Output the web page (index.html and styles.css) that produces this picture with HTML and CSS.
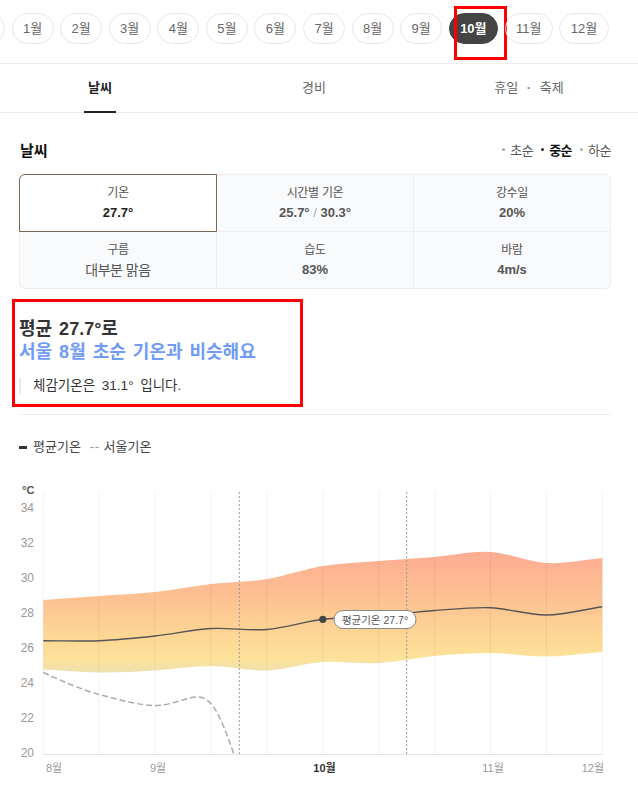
FILE: index.html
```html
<!DOCTYPE html>
<html lang="ko">
<head>
  <meta charset="UTF-8" />
  <meta name="viewport" content="width=device-width, initial-scale=1.0"/>
  <title>여행 날씨</title>
  <link rel="stylesheet" href="styles.css">
</head>
<body>
  <div class="months">
    <div class="month-track">
      <span class="month month-prev" aria-hidden="true"></span>
      <span class="month">1월</span>
      <span class="month">2월</span>
      <span class="month">3월</span>
      <span class="month">4월</span>
      <span class="month">5월</span>
      <span class="month">6월</span>
      <span class="month">7월</span>
      <span class="month">8월</span>
      <span class="month">9월</span>
      <span class="month active">10월<i class="mark mark-month"></i></span>
      <span class="month">11월</span>
      <span class="month">12월</span>
    </div>
  </div>

  <nav class="tabs">
    <a class="tab active"><span>날씨</span></a>
    <a class="tab"><span>경비</span></a>
    <a class="tab"><span>휴일 <b class="sep">·</b> 축제</span></a>
  </nav>

  <section class="weather">
    <div class="weather-head">
      <h2>날씨</h2>
      <ul class="period">
        <li>초순</li>
        <li class="on">중순</li>
        <li>하순</li>
      </ul>
    </div>

    <div class="stats">
      <div class="stat active"><span class="stat-label">기온</span><strong class="stat-value">27.7°</strong></div>
      <div class="stat"><span class="stat-label">시간별 기온</span><strong class="stat-value">25.7° <em>/</em> 30.3°</strong></div>
      <div class="stat"><span class="stat-label">강수일</span><strong class="stat-value">20%</strong></div>
      <div class="stat"><span class="stat-label">구름</span><strong class="stat-value plain">대부분 맑음</strong></div>
      <div class="stat"><span class="stat-label">습도</span><strong class="stat-value">83%</strong></div>
      <div class="stat"><span class="stat-label">바람</span><strong class="stat-value">4m/s</strong></div>
    </div>

    <div class="summary">
      <p class="summary-title">평균 27.7°로<br><em>서울 8월 초순 기온과 비슷해요</em></p>
      <p class="summary-note">체감기온은 31.1° 입니다.</p>
      <i class="mark mark-summary"></i>
    </div>

    <div class="legend">
      <span class="legend-solid"></span>평균기온
      <span class="legend-dash">--</span>서울기온
    </div>
  </section>

  <div class="chart">
    <svg width="638" height="321" viewBox="0 470 638 321">
      <defs>
        <linearGradient id="band" gradientUnits="userSpaceOnUse" x1="0" y1="552" x2="0" y2="673">
          <stop offset="0" stop-color="#fdac92"/>
          <stop offset="0.4" stop-color="#fdc292"/>
          <stop offset="0.72" stop-color="#fed895"/>
          <stop offset="0.88" stop-color="#fde29a"/>
          <stop offset="1" stop-color="#eee0b0"/>
        </linearGradient>
        <clipPath id="plot">
          <rect x="43" y="491" width="560" height="263"/>
        </clipPath>
      </defs>

      <text class="unit" x="22" y="494">°C</text>
      <g class="y-labels">
        <text x="34" y="512">34</text>
        <text x="34" y="547">32</text>
        <text x="34" y="582">30</text>
        <text x="34" y="617">28</text>
        <text x="34" y="652">26</text>
        <text x="34" y="687">24</text>
        <text x="34" y="722">22</text>
        <text x="34" y="757">20</text>
      </g>

      <path class="band" d="M43.3 600 C61.9 598.7 80.6 597.3 99.2 596 C117.8 594.7 136.5 594 155.1 592 C173.7 590 192.4 586.2 211 584 C229.6 581.8 248.3 582 266.9 579 C285.5 576 304.2 569 322.8 566 C341.4 563 360.1 562.5 378.7 561 C397.3 559.5 416 558.5 434.6 557 C453.2 555.5 471.9 551 490.5 552 C509.1 553 527.8 562 546.4 563 C565 564 583.7 559.7 602.3 558 L602.3 652 C583.7 653.5 565 656.4 546.4 656.5 C527.8 656.7 509.1 653.1 490.5 653 C471.9 652.9 453.2 654.3 434.6 656 C416 657.7 397.3 662 378.7 663 C360.1 664 341.4 660.8 322.8 662 C304.2 663.3 285.5 669.8 266.9 670.5 C248.3 671.2 229.6 666 211 666 C192.4 666 173.7 669.4 155.1 670.5 C136.5 671.6 117.8 672.7 99.2 672.5 C80.6 672.3 61.9 670.5 43.3 669.5 Z"/>

      <g class="grid">
        <line x1="43.3" y1="491" x2="43.3" y2="754"/>
        <line x1="99.2" y1="491" x2="99.2" y2="754"/>
        <line x1="155.1" y1="491" x2="155.1" y2="754"/>
        <line x1="211" y1="491" x2="211" y2="754"/>
        <line x1="266.9" y1="491" x2="266.9" y2="754"/>
        <line x1="322.8" y1="491" x2="322.8" y2="754"/>
        <line x1="378.7" y1="491" x2="378.7" y2="754"/>
        <line x1="434.6" y1="491" x2="434.6" y2="754"/>
        <line x1="490.5" y1="491" x2="490.5" y2="754"/>
        <line x1="546.4" y1="491" x2="546.4" y2="754"/>
        <line x1="602.3" y1="491" x2="602.3" y2="754"/>
      </g>
      <line class="axis" x1="43" y1="754.5" x2="603" y2="754.5"/>

      <line class="period-line" x1="239.3" y1="492" x2="239.3" y2="754"/>
      <line class="period-line" x1="406.7" y1="492" x2="406.7" y2="754"/>

      <path class="seoul" clip-path="url(#plot)" d="M43.3 672.5 C62 681 82 690 99.2 694.5 C120 700 140 705.5 155.1 705.5 C172 705.5 186 697 198 697 C204 697 208 700 213 706 C220 716 228 736 235 758"/>

      <path class="mean" d="M43.3 640.7 C61.9 640.7 80.6 641.5 99.2 640.7 C117.8 639.9 136.5 638 155.1 636 C173.7 634 192.4 629.6 211 628.5 C229.6 627.4 248.3 631 266.9 629.5 C285.5 628 304.2 621.6 322.8 619.3 C341.4 617.1 360.1 617.5 378.7 616 C397.3 614.5 416 611.9 434.6 610.5 C453.2 609.1 471.9 607 490.5 607.7 C509.1 608.5 527.8 615.2 546.4 615 C565 614.8 583.7 609.5 602.3 606.7"/>

      <circle class="dot" cx="322.8" cy="619.3" r="3.6"/>
      <rect class="tip" x="334" y="610.5" width="82" height="18" rx="9"/>
      <text class="tip-text" x="375" y="623.5">평균기온 27.7°</text>

      <g class="x-labels">
        <text x="46" y="772">8월</text>
        <text x="158" y="772" text-anchor="middle">9월</text>
        <text class="now" x="324.5" y="772" text-anchor="middle">10월</text>
        <text x="493" y="772" text-anchor="middle">11월</text>
        <text x="604" y="772" text-anchor="end">12월</text>
      </g>
    </svg>
  </div>
</body>
</html>
```

FILE: styles.css
```css
* { margin: 0; padding: 0; box-sizing: border-box; }
body {
  font-family: "Liberation Sans", "Noto Sans CJK KR", sans-serif;
  background: #fff;
  color: #333;
  width: 638px;
  overflow: hidden;
}
ul { list-style: none; }
em { font-style: normal; }

/* month strip */
.months {
  overflow: hidden;
  padding: 13px 0 19px;
  border-bottom: 1px solid #eee;
}
.month-track {
  display: flex;
  gap: 6.5px;
  margin-left: -44px;
}
.month {
  position: relative;
  flex-shrink: 0;
  height: 31px;
  line-height: 29px;
  padding: 0 10.45px;
  border: 1px solid #e6e6e6;
  border-radius: 16px;
  font-size: 13px;
  color: #666;
  white-space: nowrap;
}
.month-prev { width: 49px; }
.month.active {
  background: #444;
  border-color: #444;
  color: #fff;
  font-weight: bold;
}
.mark {
  position: absolute;
  border: 3px solid #f00;
  pointer-events: none;
}
.mark-month { left: 4px; top: -8px; width: 53px; height: 54px; }

/* tabs */
.tabs {
  display: grid;
  grid-template-columns: 200px 228px 202px;
  border-bottom: 1px solid #eee;
}
.tab {
  display: flex;
  justify-content: center;
  font-size: 13px;
  color: #666;
}
.tab span {
  display: block;
  line-height: 47px;
  padding: 0 4px;
  border-bottom: 2px solid transparent;
  margin-bottom: -1px;
}
.tab.active span {
  color: #222;
  font-weight: bold;
  border-bottom-color: #222;
}
.tab .sep { font-weight: bold; color: #888; margin: 0 5px; }

/* weather section */
.weather { padding: 25px 27px 14px 19px; }
.weather-head {
  display: flex;
  justify-content: space-between;
  align-items: center;
  height: 22px;
  margin-bottom: 14px;
}
.weather-head h2 {
  font-size: 15px;
  font-weight: bold;
  color: #111;
  padding-left: 1px;
}
.period {
  display: flex;
  gap: 8px;
  font-size: 13px;
  letter-spacing: -0.5px;
  color: #555;
}
.period li { display: flex; align-items: center; }
.period li::before {
  content: "";
  width: 3px;
  height: 3px;
  border-radius: 50%;
  background: #aaa;
  margin-right: 5px;
}
.period li.on { color: #111; font-weight: bold; }
.period li.on::before { background: #222; }

.stats {
  display: grid;
  grid-template-columns: repeat(3, 1fr);
  gap: 1px;
  background: #eceef2;
  border: 1px solid #eceef2;
  border-radius: 6px;
}
.stat {
  height: 56px;
  display: flex;
  flex-direction: column;
  align-items: center;
  justify-content: center;
  background: #f9fafc;
}
.stat:nth-child(1) { border-top-left-radius: 5px; }
.stat:nth-child(3) { border-top-right-radius: 5px; }
.stat:nth-child(4) { border-bottom-left-radius: 5px; }
.stat:nth-child(6) { border-bottom-right-radius: 5px; }
.stat.active {
  background: #fff;
  outline: 1px solid #7d6753;
}
.stat-label {
  font-size: 12px;
  line-height: 16px;
  color: #555;
  letter-spacing: -0.3px;
  margin-bottom: 3px;
}
.stat-value {
  font-size: 13px;
  line-height: 18px;
  color: #555;
}
.stat-value em { color: #aaa; font-weight: normal; }
.stat-value.plain { font-weight: normal; font-size: 14px; letter-spacing: -0.5px; }
.stat.active .stat-value { color: #222; }

.summary {
  position: relative;
  padding: 29px 0 20px;
  border-bottom: 1px solid #eee;
}
.summary-title {
  font-size: 18px;
  line-height: 23px;
  font-weight: bold;
  color: #333;
  word-spacing: 2px;
}
.summary-title em { color: #6f9cf6; }
.summary-note {
  margin-top: 14px;
  border-left: 2px solid #e8e9ef;
  padding-left: 12px;
  font-size: 13.5px;
  line-height: 16px;
  color: #333;
  word-spacing: 3px;
}
.mark-summary { left: -7px; top: 10px; width: 291px; height: 108px; }

.legend {
  display: flex;
  align-items: center;
  margin-top: 23px;
  line-height: 18px;
  font-size: 13px;
  color: #444;
}
.legend-solid {
  width: 8px;
  height: 3px;
  background: #333;
  margin-right: 6px;
}
.legend-dash { color: #999; margin: 0 4px 0 9px; letter-spacing: 0.5px; }

/* chart */
.chart svg { display: block; }
.chart text { font-family: "Liberation Sans", "Noto Sans CJK KR", sans-serif; }
.unit { font-size: 11px; font-weight: bold; fill: #555; }
.y-labels text { font-size: 12px; fill: #999; text-anchor: end; }
.x-labels text { font-size: 11px; fill: #999; }
.x-labels .now { fill: #333; font-weight: bold; }
.band { fill: url(#band); }
.grid line { stroke: #000; stroke-opacity: 0.05; stroke-width: 1; }
.axis { stroke: #e2e2e2; stroke-width: 1; }
.period-line { stroke: #9a9a9a; stroke-width: 1; stroke-dasharray: 2 2; }
.seoul { fill: none; stroke: #aaa; stroke-width: 1.5; stroke-dasharray: 6 3; }
.mean { fill: none; stroke: #555; stroke-width: 1.4; }
.dot { fill: #444; }
.tip { fill: #fff; stroke: #888; stroke-width: 1; }
.tip-text { font-size: 10.5px; fill: #555; text-anchor: middle; }
```
